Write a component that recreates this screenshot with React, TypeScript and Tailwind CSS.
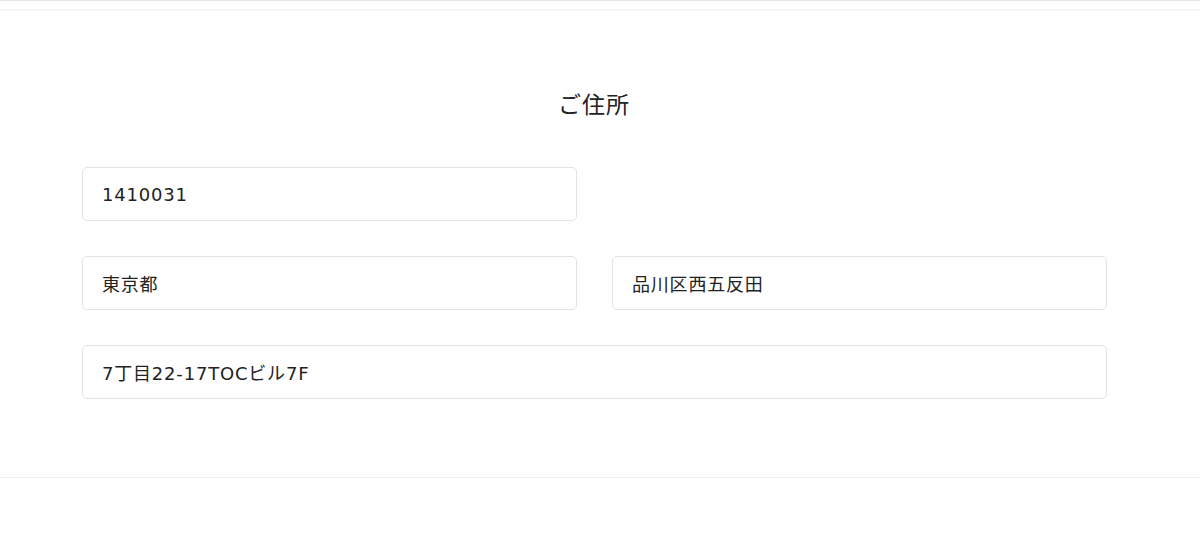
const font = { fontFamily: '"Noto Sans CJK JP", "Noto Sans", sans-serif' }
const fieldFont = { fontFamily: '"DejaVu Sans", "Noto Sans CJK JP", sans-serif' }

function Field({ value, className = '' }: { value: string; className?: string }) {
  return (
    <input
      readOnly
      value={value}
      className={`h-[54px] rounded-[5px] border border-[#e3e3e3] bg-white px-[19px] text-[18px] tracking-[0.8px] text-[#222] outline-none ${className}`}
      style={fieldFont}
    />
  )
}

export default function App() {
  return (
    <div className="min-h-[542px] bg-white" style={font}>
      <div className="h-px bg-[#e5e5e5]" />
      <div className="mt-[8px] h-[2px] bg-[#f6f6f6]" />
      <section className="border-b border-[#f0f0f0] pb-[78px]">
        <h2 className="mt-[76px] mr-[12px] text-center text-[23px] leading-[32px] tracking-[1px] text-[#222]">
          ご住所
        </h2>
        <div className="ml-[82px] mt-[48px] grid w-[1025px] grid-cols-2 gap-x-[35px] gap-y-[35px]">
          <Field value="1410031" />
          <div />
          <Field value="東京都" />
          <Field value="品川区西五反田" />
          <Field value="7丁目22-17TOCビル7F" className="col-span-2" />
        </div>
      </section>
    </div>
  )
}
